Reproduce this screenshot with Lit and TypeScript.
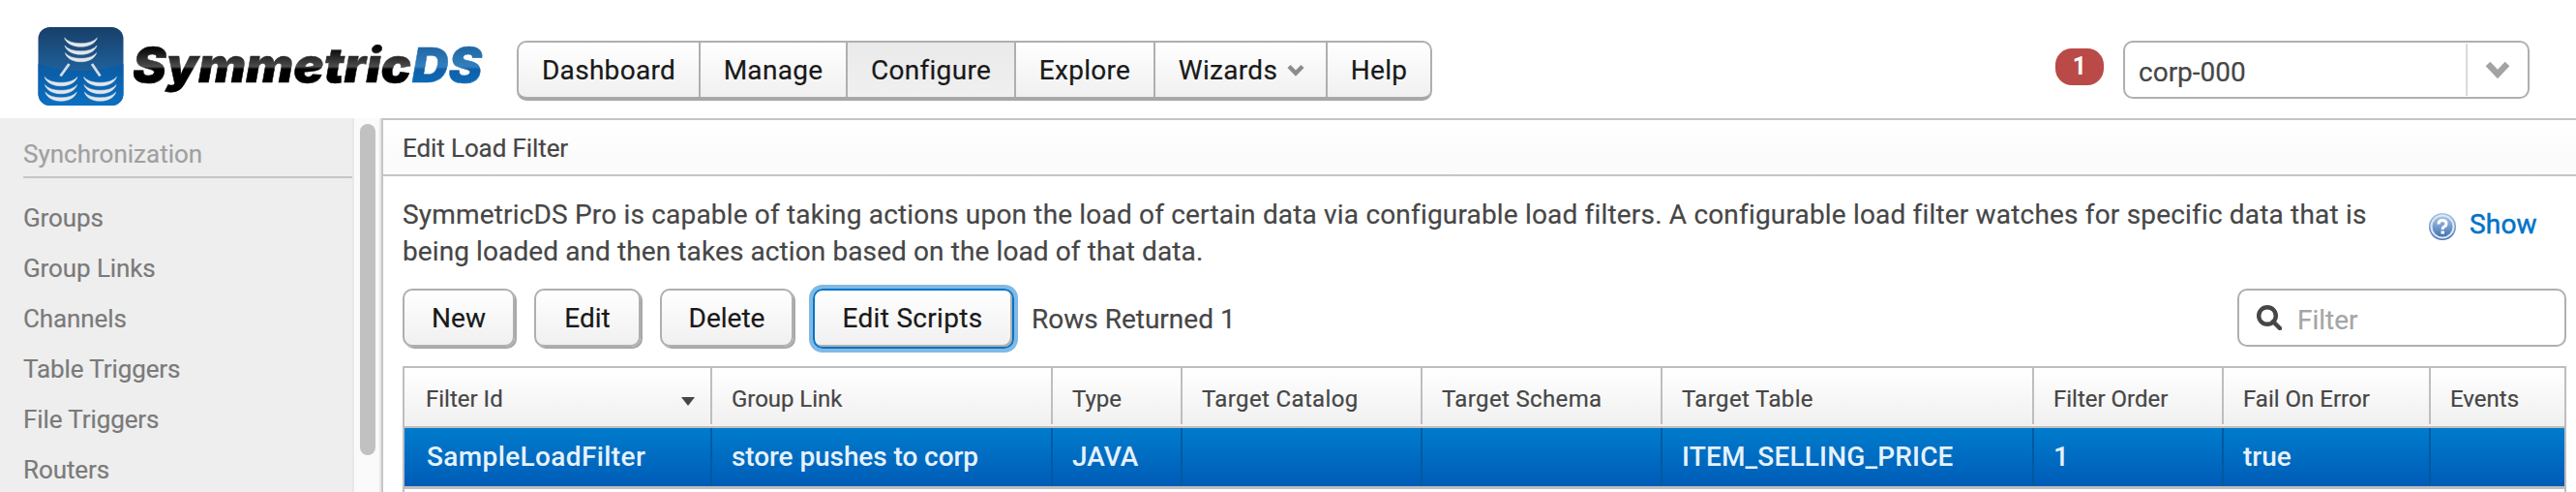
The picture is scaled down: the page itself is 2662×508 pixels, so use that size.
import { LitElement, html, css, svg } from "lit";
import { customElement } from "lit/decorators.js";
import { classMap } from "lit/directives/class-map.js";

const NAV = ["Dashboard", "Manage", "Configure", "Explore", "Wizards", "Help"];
const SIDE = ["Groups", "Group Links", "Channels", "Table Triggers", "File Triggers", "Routers"];
const COLUMNS = ["Filter Id", "Group Link", "Type", "Target Catalog", "Target Schema", "Target Table", "Filter Order", "Fail On Error", "Events"];
const ROW = ["SampleLoadFilter", "store pushes to corp", "JAVA", "", "", "ITEM_SELLING_PRICE", "1", "true", ""];

@customElement("app-logo")
class AppLogo extends LitElement {
  static styles = css`
    :host { display: block; width: 534px; height: 122px; flex: none; }
    svg { display: block; }
    .word { font: italic 900 49px Inter, "Liberation Sans", sans-serif; stroke-width: .5px; }
    .ink { fill: url(#ink); stroke: url(#ink); }
    .blue { fill: url(#blue); stroke: url(#blue); }
  `;
  dish(x: number, y: number) {
    return svg`<g transform=${`translate(${x} ${y})`}>
      ${[0, 8, 15.5].map((d, i) => {
        const w = 17 - i * 0.4;
        return svg`<path d=${`M${-w} ${d}C-13 ${d + 12.4} 13 ${d + 12.4} ${w} ${d}C11 ${d + 7.8} -11 ${d + 7.8} ${-w} ${d}Z`}></path>`;
      })}
    </g>`;
  }
  render() {
    return html`<svg width="534" height="122" viewBox="0 0 534 122">
      <defs>
        <linearGradient id="tile" x1="0" y1="0" x2="0" y2="1"><stop offset="0" stop-color="#173f68"/><stop offset=".55" stop-color="#1f609b"/><stop offset="1" stop-color="#1f609b"/></linearGradient>
        <linearGradient id="low" x1="0" y1="0" x2="0" y2="1"><stop offset="0" stop-color="#0b5aa2"/><stop offset="1" stop-color="#0b70c2"/></linearGradient>
        <linearGradient id="ink" gradientUnits="userSpaceOnUse" x1="0" y1="48" x2="0" y2="95"><stop offset="0" stop-color="#000"/><stop offset=".44" stop-color="#4c4c4c"/><stop offset=".5" stop-color="#000"/><stop offset="1" stop-color="#000"/></linearGradient>
        <linearGradient id="blue" gradientUnits="userSpaceOnUse" x1="0" y1="48" x2="0" y2="86"><stop offset="0" stop-color="#1f66a3"/><stop offset=".55" stop-color="#337fbd"/><stop offset=".62" stop-color="#0d60a9"/><stop offset="1" stop-color="#0f69b4"/></linearGradient>
      </defs>
      <rect x="39.5" y="28" width="88" height="81" rx="12" fill="url(#tile)"/>
      <path d="M39.500 66Q83 80 127.500 66V97a12 12 0 0 1-12 12H51.500a12 12 0 0 1-12-12Z" fill="url(#low)"/>
      <g fill="#e4e6ea" stroke="#e4e6ea" stroke-width=".5">${this.dish(83.5, 39)}${this.dish(63, 79.5)}${this.dish(103.5, 79.5)}</g>
      <path d="M71.500 66L62.500 78.500M95 66L103.500 78.500" stroke="#d5dde6" stroke-width="2.800"/>
      <text class="word ink" x="137" y="85" textLength="288" lengthAdjust="spacingAndGlyphs">Symmetric</text>
      <text class="word blue" x="426" y="85" textLength="72" lengthAdjust="spacingAndGlyphs">DS</text>
    </svg>`;
  }
}

@customElement("app-root")
class AppRoot extends LitElement {
  static styles = css`
    :host { display: block; width: 2662px; height: 508px; overflow: hidden; background: #fff; color: #464646; font: 28px/38px Roboto, sans-serif; -webkit-text-stroke: .2px; }
    * { box-sizing: border-box; }
    svg { display: block; flex: none; }
    .header { display: flex; height: 122px; }
    .nav { display: flex; height: 62px; margin-top: 42px; border: 2px solid #afafaf; border-bottom: 4px solid #a8a8a8; border-radius: 10px; overflow: hidden; background: linear-gradient(#fff, #f0f0f0); }
    .nav-item { display: flex; align-items: center; justify-content: center; gap: 10px; border-right: 2px solid #afafaf; color: #191919; padding-top: 1px; letter-spacing: .3px; }
    .n0 { width: 188px; } .n1 { width: 152px; } .n2 { width: 174px; } .n3 { width: 144px; } .n4 { width: 178px; padding-left: 2px; } .n5 { width: 106px; border-right: 0; }
    .active { background: linear-gradient(#eaeaea, #f0f0f0); }
    .header-end { display: flex; margin-left: auto; padding-right: 48px; }
    .badge { width: 50px; height: 38px; margin: 50px 20px 0 0; border-radius: 17px; background: #b94a48; color: #fff; font-size: 25px; font-weight: 700; line-height: 38px; text-align: center; -webkit-text-stroke: 0; }
    .select { display: flex; align-items: center; width: 420px; height: 60px; margin-top: 42px; border: 2px solid #afafaf; border-radius: 10px; padding-left: 14px; }
    .select-text { flex: 1; padding-top: 5px; }
    .select-button { display: flex; align-items: center; justify-content: center; width: 64px; height: 54px; border-left: 2px solid #dadada; }
    .body { display: flex; height: 386px; }
    .side { width: 364px; background: #eee; padding: 12px 0 0 24px; color: #7a7a7a; font-size: 26px; }
    .side-title { height: 50px; padding-top: 6px; border-bottom: 2px solid #c6c6c6; color: #a0a0a0; margin-bottom: 15px; }
    .side-item { height: 52px; line-height: 52px; letter-spacing: -.1px; }
    .track { width: 30px; padding: 6px; background: #fafafa; border: solid #e8e8e8; border-width: 0 2px; }
    .thumb { width: 16px; height: 342px; border-radius: 8px; background: #c1c1c1; }
    .main { flex: 1; min-width: 0; border: solid #c5c5c5; border-width: 2px 0 0 2px; }
    .title { height: 58px; padding: 11px 20px 0; border-bottom: 2px solid #c5c5c5; background: linear-gradient(#fff, #fafafa); font-size: 26px; line-height: 36px; letter-spacing: -.1px; }
    .content { padding: 21px 10px 0 20px; }
    .intro { display: flex; height: 95px; }
    .intro-text { width: 2060px; white-space: nowrap; }
    .line1 { letter-spacing: .177px; }
    .line2 { letter-spacing: .1px; }
    .help { display: flex; padding: 10px 0 0 34px; gap: 14px; color: #0073c8; -webkit-text-stroke: .5px; letter-spacing: .2px; }
    .help svg { margin-top: 7px; }
    .toolbar { display: flex; height: 80px; }
    .btn { height: 60px; margin-right: 20px; border: 2px solid #afafaf; border-radius: 10px; background: linear-gradient(#fff, #f0f0f0); box-shadow: 2px 2px 0 #a9a9a9; color: #191919; line-height: 57px; text-align: center; }
    .b0 { width: 116px; } .b1 { width: 110px; } .b2 { width: 138px; }
    .b3 { width: 208px; height: 62px; padding-right: 2px; letter-spacing: .3px; border-color: #0073c8; box-shadow: 0 0 0 4px #80b9e4, inset -2px -2px 0 #b0b0b0; }
    .count { padding-top: 13px; margin-left: -2px; }
    .search { display: flex; align-items: center; width: 340px; height: 60px; margin-left: auto; padding-left: 18px; gap: 16px; border: 2px solid #afafaf; border-radius: 10px; color: #a5a5a5; }
    .search-text { padding-top: 5px; }
    .table { height: 140px; border: 2px solid #bebebe; border-bottom: 0; }
    .row { display: grid; grid-template-columns: 318px 352px 134px 248px 248px 384px 196px 214px 138px; }
    .head { height: 62px; border-bottom: 2px solid #bebebe; background: linear-gradient(#fff, #f0f0f0); font-size: 24px; }
    .cell { padding-left: 20px; }
    .head .cell { display: flex; align-items: center; justify-content: space-between; height: 58px; padding-top: 5px; background: linear-gradient(#bebebe, #bebebe) right / 2px 100% no-repeat; }
    .head .cell:nth-child(2) { letter-spacing: -.05px; }
    .head .cell:nth-child(n+4):nth-child(-n+6) { letter-spacing: .36px; }
    .head .cell:last-child, .data .cell:last-child { background: none; border: 0; }
    .row .cell:first-child { padding-left: 22px; padding-right: 18px; }
    .data { height: 63px; border-bottom: 3px solid #bebebe; background: linear-gradient(#007ccd, #005cb6); color: #e6f2fb; font-weight: 500; line-height: 60px; -webkit-text-stroke: 0; }
    .data .cell { border-right: 2px solid #005a9f; }
    .data .cell:first-child { padding-left: 23px; letter-spacing: .38px; }
    .data .cell:nth-child(2) { letter-spacing: -.08px; }
    .data .cell:nth-child(6) { letter-spacing: .18px; }
  `;
  render() {
    return html`
      <div class="header">
        <app-logo></app-logo>
        <div class="nav">${NAV.map((t, i) => html`<div class=${classMap({ "nav-item": true, [`n${i}`]: true, active: i === 2 })}><span>${t}</span>${t === "Wizards" ? html`<svg width="18" height="13"><path d="M2 2.500L9 9.500L16 2.500" fill="none" stroke="#8c8c8c" stroke-width="4.500"/></svg>` : ""}</div>`)}</div>
        <div class="header-end">
          <div class="badge">1</div>
          <div class="select"><span class="select-text">corp-000</span><div class="select-button"><svg width="26" height="18"><path d="M3 3L13 13.500L23 3" fill="none" stroke="#a3a3a3" stroke-width="6.500"/></svg></div></div>
        </div>
      </div>
      <div class="body">
        <div class="side"><div class="side-title">Synchronization</div>${SIDE.map((t) => html`<div class="side-item">${t}</div>`)}</div>
        <div class="track"><div class="thumb"></div></div>
        <div class="main">
          <div class="title">Edit Load Filter</div>
          <div class="content">
            <div class="intro">
              <div class="intro-text">
                <div class="line1">SymmetricDS Pro is capable of taking actions upon the load of certain data via configurable load filters. A configurable load filter watches for specific data that is</div>
                <div class="line2">being loaded and then takes action based on the load of that data.</div>
              </div>
              <div class="help">
                <svg width="28" height="28" viewBox="0 0 28 28"><defs><linearGradient id="h" x1="0" y1="0" x2="0" y2="1"><stop offset="0" stop-color="#a9c4e6"/><stop offset="1" stop-color="#4373b3"/></linearGradient></defs><circle cx="14" cy="14" r="14" fill="url(#h)"/><circle cx="14" cy="14" r="12.500" fill="#dce8f6"/><circle cx="14" cy="14" r="10.500" fill="url(#h)"/><path d="M10 11.500Q10 7.500 14 7.500T18 11Q18 13 16 14T14.200 17" fill="none" stroke="#fff" stroke-width="3"/><rect x="12.500" y="18.500" width="3.500" height="3" fill="#fff"/></svg>
                <span>Show</span>
              </div>
            </div>
            <div class="toolbar">
              ${["New", "Edit", "Delete", "Edit Scripts"].map((t, i) => html`<div class="btn b${i}">${t}</div>`)}
              <div class="count">Rows Returned 1</div>
              <div class="search"><svg width="26" height="26"><circle cx="11" cy="11" r="8.800" fill="none" stroke="#464646" stroke-width="4.400"/><path d="M17 17L24 24" stroke="#464646" stroke-width="4.500" stroke-linecap="round"/></svg><span class="search-text">Filter</span></div>
            </div>
            <div class="table">
              <div class="row head">${COLUMNS.map((t, i) => html`<div class="cell"><span>${t}</span>${i === 0 ? html`<svg width="14" height="14"><path d="M0 5H14L7 14Z" fill="#464646"/></svg>` : ""}</div>`)}</div>
              <div class="row data">${ROW.map((t) => html`<div class="cell">${t}</div>`)}</div>
            </div>
          </div>
        </div>
      </div>`;
  }
}
